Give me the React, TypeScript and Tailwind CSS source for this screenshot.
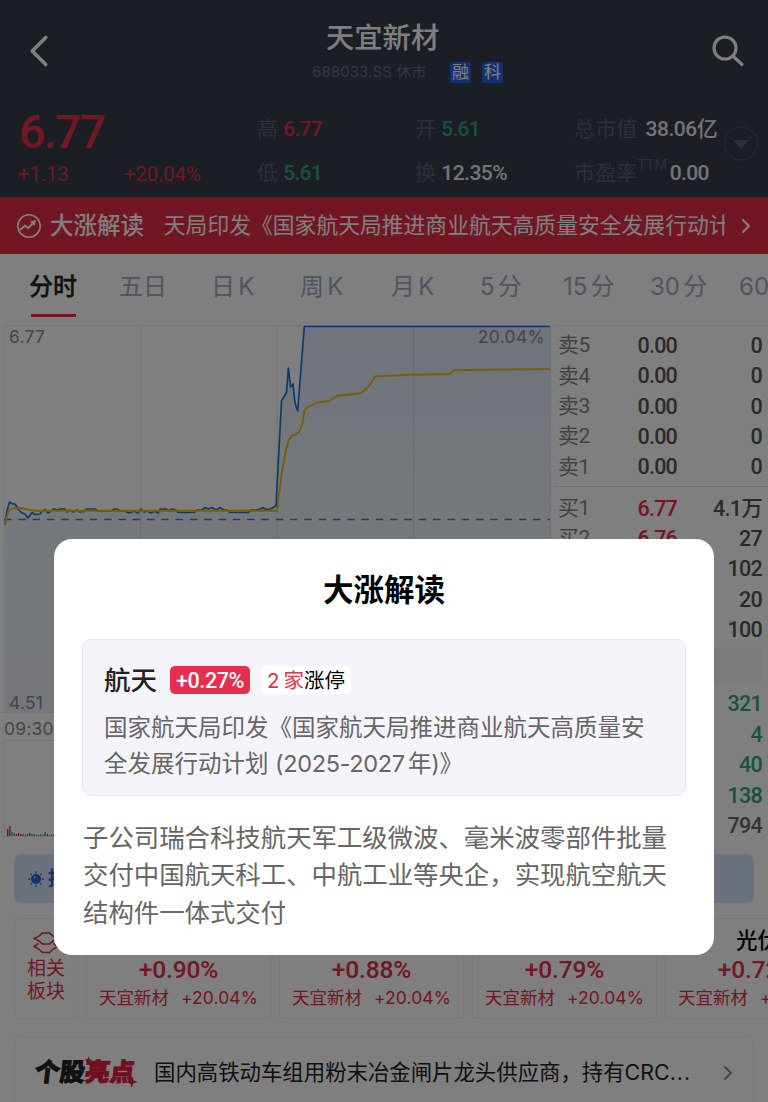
import type { ReactNode } from "react";
import { ChevronLeft, ChevronRight } from "lucide-react";

const RED = "text-[#e62e45]";
const GREEN = "text-[#2fa578]";
const DIN = "font-['Roboto','Noto_Sans_CJK_SC',sans-serif]";

const TABS = ["五日", "日 K", "周 K", "月 K", "5 分", "15 分", "30 分", "60 分"];
const TAB_WIDTHS = ["w-[92px]", "w-[89px]", "w-[91px]", "w-[89px]", "w-[83px]", "w-[87px]", "w-[89px]", "w-[80px]"];

const SELLS = ["卖5", "卖4", "卖3", "卖2", "卖1"];
const BUYS = [
  { label: "买1", price: "6.77", amount: "4.1万" },
  { label: "买2", price: "6.76", amount: "27" },
  { label: "", price: "", amount: "102" },
  { label: "", price: "", amount: "20" },
  { label: "", price: "", amount: "100" },
];
const TRADES = [
  { amount: "321", up: false },
  { amount: "4", up: false },
  { amount: "40", up: false },
  { amount: "138", up: false },
  { amount: "794", up: true },
];

const BOARDS = [
  { name: "", change: "+0.90%" },
  { name: "", change: "+0.88%" },
  { name: "", change: "+0.79%" },
  { name: "光伏", change: "+0.72%" },
];

const PRICE_LINE =
  "5,524 7,511 9.5,502 13,504 15,504 18,509 22,513 25,514 28,518 32,512.5 35,514.5 40,514 42,511 45,509.5 48,513 51,511 54,509 58,510 60,509 65,509 67,512 70,510 73,512 77,510 80,512 84,511.5 87,509 95,509 98,511 111,511 114,509 117,509 120,511 125,511 129,513 134,511 138,513 141,509 144,512 147,511 151,513 155,511 158,513 160,509 166,509 169,511 172,509 176,510 178,512.5 194,512.5 197,510 202,510 205,507.5 208,509 212,507.5 216,510 220,507.5 224,510 227,510 230,512.5 248,512.5 251,510 256,510 260,509 263,507.5 266,509.5 270,509 276,506 281.5,401 286.5,392.5 288.4,368 290.6,387 293,384 295,403 297.7,411 304.3,326.5 550,326.5";
const AVERAGE_LINE =
  "5,525 7,516 9,510 13,508.3 22,508.3 30,510 36,510.7 277,510.7 281.7,473 286,450 288.5,441 292,435.5 297,434 300.5,429.5 302.5,423 304.5,410 308,407 317,402.5 329,401 337,395.7 361,393.3 369,386 375,376.5 412,374.8 448,374 451,373 454,370.3 550,369";

const VOLUMES = [7, 10, 4, 3, 2, 3, 2, 2, 1, 2, 3, 2, 2, 1, 1, 2, 1, 4, 2, 1, 1, 2, 3];

function Stat({ label, sup, value, color }: { label: string; sup?: string; value: string; color: string }) {
  const wide = value.length > 4;
  return (
    <div className="flex h-11 items-center whitespace-nowrap">
      <span className="text-[21px] tracking-[0.2px] text-[#5c606b]">{label}</span>
      {sup && <sup className={`${DIN} -top-[7px] text-[14.5px] tracking-[-0.3px] text-[#5c606b]`}>{sup}</sup>}
      <span
        className={`${DIN} ${sup ? "ml-[3px]" : label.length > 1 ? "ml-[8px]" : "ml-[5px]"} ${wide ? "tracking-[-0.5px]" : "tracking-[-0.7px]"} mt-[2px] text-[21px] font-medium ${color}`}
      >
        {value}
      </span>
    </div>
  );
}

function Header() {
  return (
    <header className="h-[197px] bg-[#363c4b]">
      <div className="flex h-[107px] items-start justify-between">
        <ChevronLeft className="mt-[24px] ml-[12px] h-[54px] w-[54px] text-white" strokeWidth={1.6} />
        <div className="pt-[17px] pl-[38px]">
          <h1 className="pl-[14px] text-[28.3px] leading-[42px] font-medium text-white">天宜新材</h1>
          <div className="flex h-[26px] items-center whitespace-nowrap">
            <span className="w-[138px] text-[15px] tracking-[0.1px] text-[#70727a]">688033.SS 休市</span>
            <span className="mr-[11px] flex h-[21px] w-[21px] items-center justify-center rounded-[3px] bg-[#2463dc] pt-px text-[17px] text-white">融</span>
            <span className="flex h-[21px] w-[21px] items-center justify-center rounded-[3px] bg-[#2463dc] pt-px text-[17px] text-white">科</span>
          </div>
        </div>
        <svg className="mt-[34px] mr-[23px] h-[34px] w-[34px]" viewBox="0 0 34 34" fill="none" stroke="#fff" strokeWidth="3.2" strokeLinecap="round">
          <circle cx="14" cy="14" r="11" />
          <path d="M22.5 22.5 31 30.5" />
        </svg>
      </div>
      <div className="flex">
        <div className="w-[257px] pl-[18px]">
          <div className={`${DIN} h-[44px] pl-px text-[46.5px] leading-[50px] font-medium tracking-[-1.8px] ${RED}`}>6.77</div>
          <div className={`${DIN} flex h-[44px] items-center pt-[2px] text-[20.5px] tracking-[-0.2px] ${RED}`}>
            <span className="w-[106px]">+1.13</span>
            <span>+20.04%</span>
          </div>
        </div>
        <div className="w-[158px]">
          <Stat label="高" value="6.77" color={RED} />
          <Stat label="低" value="5.61" color={GREEN} />
        </div>
        <div className="w-[159px]">
          <Stat label="开" value="5.61" color={GREEN} />
          <Stat label="换" value="12.35%" color="text-[#e8e8ea]" />
        </div>
        <div className="w-[150px]">
          <Stat label="总市值" value="38.06亿" color="text-[#e8e8ea]" />
          <Stat label="市盈率" sup="TTM" value="0.00" color="text-[#e8e8ea]" />
        </div>
        <svg className="mt-[18px] h-9 w-9 shrink-0" viewBox="0 0 36 36">
          <circle cx="17" cy="18.5" r="16.5" fill="none" stroke="#474c59" strokeWidth="2" />
          <path d="M9 15h16l-8 9z" fill="#5c606b" />
        </svg>
      </div>
    </header>
  );
}

function Banner() {
  return (
    <div className="flex h-[57px] items-center bg-[#e42d49] text-white">
      <svg className="ml-4 h-[26px] w-[26px]" viewBox="0 0 26 26" fill="none" stroke="currentColor" strokeWidth="1.6">
        <circle cx="13" cy="13" r="11.2" />
        <path d="m4 17 5-4.5 3 2.7 6-6" strokeWidth="2" />
        <path d="m14 8.5 6-1.5-1.5 6z" fill="currentColor" stroke="none" />
      </svg>
      <span className="ml-[8px] text-[23.5px] font-medium">大涨解读</span>
      <div className="ml-[19px] flex w-[562px] overflow-hidden whitespace-nowrap">
        <span className="-ml-[21px] text-[21.8px]">航天局印发《国家航天局推进商业航天高质量安全发展行动计</span>
      </div>
      <ChevronRight className="ml-[9px] h-6 w-6" strokeWidth={2.2} />
    </div>
  );
}

function Tabs() {
  return (
    <nav className="flex h-[71px] overflow-hidden whitespace-nowrap pl-[29px] text-[24px] [word-spacing:-3.5px] text-[#a0aabe]">
      <div className="flex w-[90px] shrink-0 flex-col">
        <span className="h-[62px] pt-[13px] leading-[40px] font-medium text-[#222] [-webkit-text-stroke:0.3px_currentColor]">分时</span>
        <span className="-mt-0.5 ml-0.5 h-[3px] w-[45px] bg-[#e62e45]" />
      </div>
      {TABS.map((tab, i) => (
        <span key={tab} className={`${TAB_WIDTHS[i]} shrink-0 pt-[13px] leading-[40px]`}>{tab}</span>
      ))}
    </nav>
  );
}

function Chart() {
  return (
    <div className="relative w-[554px] shrink-0">
      <svg width="554" height="515" viewBox="0 325 554 515" fill="none">
        <defs>
          <linearGradient id="area" x1="0" y1="0" x2="0" y2="1">
            <stop offset="0" stopColor="#2f6fe0" stopOpacity="0.16" />
            <stop offset="0.4" stopColor="#5a8fc8" stopOpacity="0.13" />
            <stop offset="1" stopColor="#6a90bc" stopOpacity="0.14" />
          </linearGradient>
        </defs>
        <polygon points={`5,712 ${PRICE_LINE} 550,712`} fill="url(#area)" />
        <path d="M4 325.7H550.5V712.5H4zM140.5 326V712M277 326V712M413.5 326V712M4 740.5H550V836.5H4zM140.5 740V836" stroke="#000" strokeOpacity="0.09" />
        <path d="M4 519.5H550" stroke="#4a78c4" strokeWidth="1.3" strokeDasharray="7.5 6.8" />
        <polyline points={PRICE_LINE} stroke="#1874e0" strokeWidth="1.7" strokeLinejoin="round" />
        <polyline points={AVERAGE_LINE} stroke="#eebd10" strokeWidth="1.9" strokeLinejoin="round" />
        {VOLUMES.map((v, i) => (
          <rect key={i} x={7 + i * 2.2} y={836 - v} width="1.4" height={v} fill={i % 4 === 3 || i % 5 === 2 ? "#2fa578" : "#e62e45"} />
        ))}
      </svg>
      <span className="absolute top-[-1px] left-[9px] text-[17.5px] leading-[26px] tracking-[0.2px] text-[#8a8a8a]">6.77</span>
      <span className="absolute top-[-1px] right-[9px] text-[17.5px] leading-[26px] tracking-[0.3px] text-[#8a8a8a]">20.04%</span>
      <span className="absolute top-[365px] left-[9px] text-[17.5px] leading-[26px] tracking-[0.2px] text-[#8a8a8a]">4.51</span>
      <span className="absolute top-[391px] left-1 text-[17.5px] leading-[26px] tracking-[0.2px] text-[#8a8a8a]">09:30</span>
    </div>
  );
}

function BookRow({ label, price, amount, color }: { label: string; price: string; amount: string; color: string }) {
  return (
    <div className={`${DIN} flex h-[30.35px] items-center text-[21.5px] text-[#555]`}>
      <span className="w-[60px] pl-1 text-[21px] tracking-[-0.6px] text-[#858585]">{label}</span>
      <span className={`w-[63px] text-right font-medium tracking-[-0.8px] ${color}`}>{price}</span>
      <span className="flex-1 text-right font-medium tracking-[-0.7px]">{amount}</span>
    </div>
  );
}

function OrderBook() {
  return (
    <div className="flex-1 border-t border-[#eee] pt-[5px] pr-[6px]">
      {SELLS.map((label) => (
        <BookRow key={label} label={label} price="0.00" amount="0" color="text-[#555]" />
      ))}
      <div className="-mr-[6px] mt-[3px] mb-[7px] h-px bg-[#e2e2e2]" />
      {BUYS.map((b) => (
        <BookRow key={b.amount} {...b} color={RED} />
      ))}
      <div className="mt-[2px] mb-[6px] h-[36px] bg-[#f6f6f6]" />
      {TRADES.map((t) => (
        <div
          key={t.amount}
          className={`${DIN} flex h-[30.35px] items-center justify-end text-[21.5px] font-medium tracking-[-0.7px] ${t.up ? "text-[#666]" : GREEN}`}
        >
          {t.amount}
        </div>
      ))}
    </div>
  );
}

function NoticeBar() {
  return (
    <div className="mt-[14px] ml-[14px] flex h-[49px] w-[740px] items-center rounded-md bg-[#d6e3fc] text-[#2468d8]">
      <svg className="ml-[14px] h-4 w-4" viewBox="0 0 16 16" stroke="currentColor" strokeWidth="1.4" strokeLinecap="round">
        <circle cx="8" cy="8" r="5" fill="currentColor" stroke="none" />
        <path d="M8 .8v1M8 14.2v1M.8 8h1M14.2 8h1M3 3l.5.5M12.5 12.5l.5.5M3 13l.5-.5M12.5 3.5 13 3" />
        <circle cx="6.6" cy="6.4" r="1" fill="#d6e3fc" stroke="none" />
      </svg>
      <span className="ml-1 text-[20px] font-bold">提</span>
    </div>
  );
}

function Boards() {
  return (
    <div className="mt-[15px] flex h-[101px] overflow-hidden pl-[14px] whitespace-nowrap">
      <div className="mr-2 flex w-[64px] shrink-0 flex-col items-center rounded-sm border border-[#f0f0f0] pt-3 text-[19px] leading-[23px] text-[#e62e45]">
        <svg className="mb-[2px] h-[24px] w-[28px]" viewBox="0 0 28 24" fill="none" stroke="currentColor" strokeWidth="1.7" strokeLinejoin="round">
          <path d="M2 7.5Q7 6 10.5 2H17.5Q21 6 26 7.5 21 9 17.5 13H10.5Q7 9 2 7.5z" />
          <path d="M6.5 12.5 2 15.5Q7 17.5 10.5 21.5H17.5Q21 17.5 26 15.5L21.5 12.5" />
        </svg>
        <span>相关</span>
        <span>板块</span>
      </div>
      {BOARDS.map((b) => (
        <div key={b.change} className="mr-2 flex w-[185px] shrink-0 flex-col items-center rounded-sm border border-[#f0f0f0] pt-[7px] shadow-xs">
          <span className="h-[29px] text-[21.5px] leading-[29px] font-medium text-black">{b.name}</span>
          <span className={`${DIN} text-[24.5px] leading-[30px] font-medium tracking-[-0.1px] ${RED}`}>{b.change}</span>
          <span className={`mt-px flex gap-3 text-[17.5px] leading-[24px] ${RED}`}>
            <span>天宜新材</span>
            <span className="tracking-[0.1px]">+20.04%</span>
          </span>
        </div>
      ))}
    </div>
  );
}

function Highlight() {
  return (
    <div className="mt-[17px] ml-[14px] flex h-[80px] w-[740px] items-start rounded-t-md border border-[#f0f0f0] pt-[15px] whitespace-nowrap">
      <div className="relative ml-[20px] flex h-[41px] w-[105px] -skew-x-6 items-center text-[25px] font-black text-[#222] [-webkit-text-stroke:0.9px_currentColor]">
        <span>个股</span>
        <span className="text-[#e21e40]">亮点</span>
        <svg className="absolute top-1 left-[48px] h-[36px] w-[58px]" viewBox="0 0 58 36" fill="#e21e40">
          <path d="M4 0l1 3 3 1-3 1-1 3-1-3-3-1 3-1zM50 20l1.5 4.5L56 26l-4.5 1.5L50 32l-1.5-4.5L44 26l4.5-1.5z" />
        </svg>
      </div>
      <span className="ml-[14px] w-[560px] text-[21.4px] leading-[41px] text-[#222]">
        国内高铁动车组用粉末冶金闸片龙头供应商，持有CRC<span className="tracking-[1px]">...</span>
      </span>
      <ChevronRight className="mt-[9px] ml-[2px] h-6 w-6 text-[#888]" strokeWidth={2} />
    </div>
  );
}

function Modal({ children }: { children: ReactNode }) {
  return (
    <div className="absolute inset-0 bg-black/50">
      <div className="mt-[539px] ml-[54px] h-[416px] w-[660px] rounded-[18px] bg-white px-7 pt-[30px] whitespace-nowrap">{children}</div>
    </div>
  );
}

export default function App() {
  return (
    <div className="relative h-[1102px] w-[768px] overflow-hidden bg-white font-['Inter','Noto_Sans_CJK_SC',sans-serif]">
      <Header />
      <Banner />
      <Tabs />
      <main className="flex h-[515px]">
        <Chart />
        <OrderBook />
      </main>
      <NoticeBar />
      <Boards />
      <Highlight />
      <Modal>
        <h2 className="text-center text-[30.5px] leading-[42px] font-bold text-black">大涨解读</h2>
        <section className="mt-[28px] h-[157px] w-[604px] rounded-[10px] border border-[#e6e6ec] bg-[#f5f4fb] pt-[22px] pl-[21px]">
          <div className="flex h-[36px] items-center">
            <span className="pt-0.5 text-[26.5px] font-medium text-[#222]">航天</span>
            <span className={`${DIN} ml-[13px] flex h-7 w-20 items-center justify-center rounded-[5px] bg-[#e62e4d] pt-0.5 text-[21.5px] font-medium tracking-[-0.4px] text-white`}>
              +0.27%
            </span>
            <span className="ml-[11px] flex h-7 w-[90px] items-center justify-center rounded-[5px] bg-white pt-0.5 text-[20.5px] [word-spacing:-2px] text-black">
              <span className={RED}>2 家</span>涨停
            </span>
          </div>
          <p className="mt-[12px] text-[23.5px] leading-[36px] text-[#666]">
            国家航天局印发《国家航天局推进商业航天高质量安
            <br />
            全发展行动计划 <span className="tracking-[-0.35px] [word-spacing:-3px]">(2025-2027 年)》</span>
          </p>
        </section>
        <p className="mt-[23px] ml-px text-[25.4px] leading-[37.3px] text-[#666]">
          子公司瑞合科技航天军工级微波、毫米波零部件批量
          <br />
          交付中国航天科工、中航工业等央企，实现航空航天
          <br />
          结构件一体式交付
        </p>
      </Modal>
    </div>
  );
}
